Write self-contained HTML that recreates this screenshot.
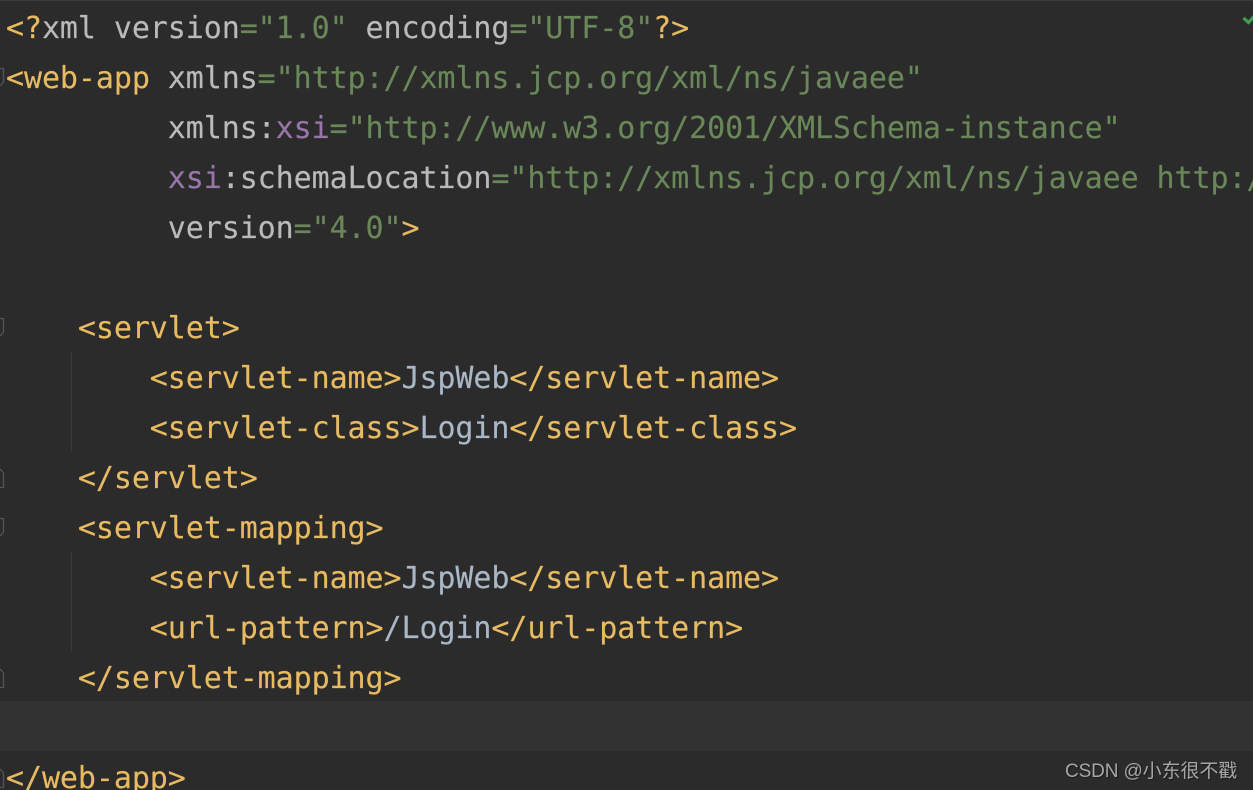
<!DOCTYPE html>
<html>
<head>
<meta charset="utf-8">
<style>
html,body{margin:0;padding:0;background:#2b2b2b;}
#e{position:relative;width:1253px;height:790px;overflow:hidden;background:#2b2b2b;}
.l{position:absolute;left:6px;height:50px;line-height:50px;white-space:pre;font-family:"DejaVu Sans Mono","Liberation Mono",monospace;font-size:30px;letter-spacing:-0.085px;color:#bababa;-webkit-text-stroke:0.15px currentColor;}
.t{color:#e8bb62}.s{color:#6a8759}.x{color:#9876aa}.v{color:#a9b7c6}
.g{position:absolute;left:71px;width:1px;background:#3b3b3b;}
.f{position:absolute;left:0;}
#w{position:absolute;left:1065px;top:759px;font:19px/26px "Liberation Sans","Noto Sans CJK SC",sans-serif;letter-spacing:-0.12px;color:#a6a6a6;white-space:pre;text-shadow:1px 1px 1px #1c1c1c;}
</style>
</head>
<body>
<div id="e">
<div style="position:absolute;left:0;top:0;width:1253px;height:1px;background:#3a3a3a"></div>
<div style="position:absolute;left:0;top:701px;width:1253px;height:50px;background:#323232"></div>
<div class="g" style="top:351px;height:100px"></div>
<div class="g" style="top:551px;height:100px"></div>

<svg class="f" style="top:0;width:6px;height:790px" width="6" height="790" fill="none" stroke="#555555" stroke-width="1.3">
<path d="M-1 68.5H3.5V82L0.5 85.5H-1"/>
<path d="M-1 318.5H3.5V332L0.5 335.5H-1"/>
<path d="M-1 518.5H3.5V532L0.5 535.5H-1"/>
<path d="M-1 487.5H3.5V473L0.5 469.5H-1"/>
<path d="M-1 687.5H3.5V673L0.5 669.5H-1"/>
<path d="M-1 787.5H3.5V773L0.5 769.5H-1"/>
</svg>
<svg style="position:absolute;left:1242px;top:13px" width="11" height="12" fill="none" stroke="#3f9c50" stroke-width="3.2"><path d="M1.5 5L6.5 9.5L12.5 3"/></svg>

<div class="l" style="top:4px"><span class="t">&lt;?</span>xml version<span class="s">="1.0"</span> encoding<span class="s">="UTF-8"</span><span class="t">?&gt;</span></div>
<div class="l" style="top:54px"><span class="t">&lt;web-app</span> xmlns<span class="s">="http://xmlns.jcp.org/xml/ns/javaee"</span></div>
<div class="l" style="top:104px">         xmlns:<span class="x">xsi</span><span class="s">="http://www.w3.org/2001/XMLSchema-instance"</span></div>
<div class="l" style="top:154px">         <span class="x">xsi</span>:schemaLocation<span class="s">="http://xmlns.jcp.org/xml/ns/javaee http://xmlns.jcp.org/xml/ns/javaee/web-app_4_0.xsd"</span></div>
<div class="l" style="top:204px">         version<span class="s">="4.0"</span><span class="t">&gt;</span></div>
<div class="l t" style="top:304px">    &lt;servlet&gt;</div>
<div class="l t" style="top:354px">        &lt;servlet-name&gt;<span class="v">JspWeb</span>&lt;/servlet-name&gt;</div>
<div class="l t" style="top:404px">        &lt;servlet-class&gt;<span class="v">Login</span>&lt;/servlet-class&gt;</div>
<div class="l t" style="top:454px">    &lt;/servlet&gt;</div>
<div class="l t" style="top:504px">    &lt;servlet-mapping&gt;</div>
<div class="l t" style="top:554px">        &lt;servlet-name&gt;<span class="v">JspWeb</span>&lt;/servlet-name&gt;</div>
<div class="l t" style="top:604px">        &lt;url-pattern&gt;<span class="v">/Login</span>&lt;/url-pattern&gt;</div>
<div class="l t" style="top:654px">    &lt;/servlet-mapping&gt;</div>
<div class="l t" style="top:754px">&lt;/web-app&gt;</div>
<div id="w">CSDN @小东很不戳</div>
</div>
</body>
</html>
